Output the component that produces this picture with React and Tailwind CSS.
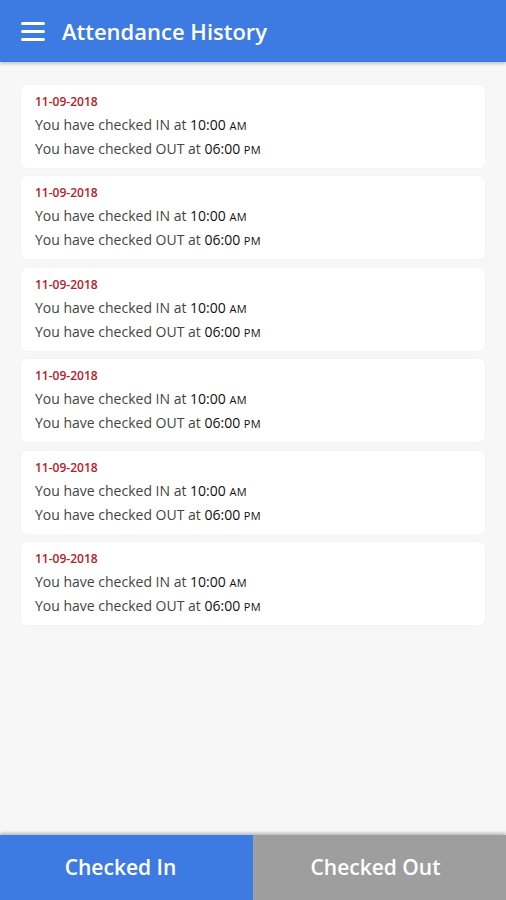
import React from 'react';

const records = Array.from({ length: 6 }, (_, i) => ({
  id: i,
  date: '11-09-2018',
  inTime: '10:00',
  inPeriod: 'AM',
  outTime: '06:00',
  outPeriod: 'PM',
}));

function Time({ time, period }) {
  return (
    <span className="text-[#111]">
      {time} <span className="text-[11px] tracking-wide">{period}</span>
    </span>
  );
}

export default function App() {
  return (
    <div
      className="flex flex-col h-[900px] w-[506px] bg-[#f7f7f7]"
      style={{ fontFamily: '"Open Sans", "Noto Sans", sans-serif' }}
    >
      <header className="flex items-center h-[62px] bg-[#3d7be3] shadow-[0_2px_3px_rgba(0,0,0,0.2)] z-10">
        <div className="ml-[21px] flex flex-col gap-[5px]">
          <span className="block w-[24px] h-[3px] bg-white rounded-sm" />
          <span className="block w-[24px] h-[3px] bg-white rounded-sm" />
          <span className="block w-[24px] h-[3px] bg-white rounded-sm" />
        </div>
        <h1 className="ml-[17px] text-[22px] font-semibold text-white">Attendance History</h1>
      </header>

      <main className="flex-1 px-[21px] pt-[23px] flex flex-col gap-[8.4px]">
        {records.map(r => (
          <div key={r.id} className="bg-white rounded-[6px] h-[83px] pl-[14px] pt-[9px] shadow-[0_0_2px_rgba(0,0,0,0.06)]">
            <div className="text-[12px] font-semibold text-[#b3202a] leading-[16px]">{r.date}</div>
            <div className="text-[14px] text-[#444] leading-[22px] mt-[4px]">
              You have checked IN at <Time time={r.inTime} period={r.inPeriod} />
            </div>
            <div className="text-[14px] text-[#444] leading-[22px] mt-[1px]">
              You have checked OUT at <Time time={r.outTime} period={r.outPeriod} />
            </div>
          </div>
        ))}
      </main>

      <footer className="grid grid-cols-2 h-[65px] shadow-[0_-2px_3px_rgba(0,0,0,0.25)]">
        <button className="bg-[#3d7be3] text-white text-[21px] font-semibold pr-[12px]">Checked In</button>
        <button className="bg-[#9e9e9e] text-white text-[21px] font-semibold pr-[8px]">Checked Out</button>
      </footer>
    </div>
  );
}
